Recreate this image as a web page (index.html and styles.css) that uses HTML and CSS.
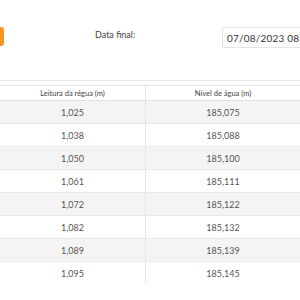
FILE: index.html
```html
<!DOCTYPE html>
<html lang="pt-BR">
  <head>
    <meta charset="UTF-8" />
    <title>Leituras</title>
    <link rel="stylesheet" href="styles.css">
  </head>
  <body>
    <div class="filters">
      <button class="btn-search" aria-label="Buscar"></button>
      <label class="filter-label" for="data-final">Data final:</label>
      <input id="data-final" class="date-input" type="text" value="07/08/2023 08:00" />
    </div>

    <div class="divider"></div>

    <table class="readings">
      <thead>
        <tr>
          <th>Leitura da régua (m)</th>
          <th>Nível de água (m)</th>
        </tr>
      </thead>
      <tbody>
        <tr><td>1,025</td><td>185,075</td></tr>
        <tr><td>1,038</td><td>185,088</td></tr>
        <tr><td>1,050</td><td>185,100</td></tr>
        <tr><td>1,061</td><td>185,111</td></tr>
        <tr><td>1,072</td><td>185,122</td></tr>
        <tr><td>1,082</td><td>185,132</td></tr>
        <tr><td>1,089</td><td>185,139</td></tr>
        <tr><td>1,095</td><td>185,145</td></tr>
      </tbody>
    </table>
  </body>
</html>
```

FILE: styles.css
```css
body {
  margin: 0;
  font-family: Lato, "Open Sans", sans-serif;
  color: #555;
  background-color: white;
  overflow: hidden;
}
.filters {
  display: flex;
  align-items: flex-start;
  height: 80px;
  padding-top: 27px;
  box-sizing: border-box;
}
.btn-search {
  width: 4px;
  height: 19px;
  padding: 0;
  border: none;
  border-radius: 0 3px 3px 0;
  background-color: #f7931e;
  flex-shrink: 0;
}
.filter-label {
  margin-left: 91px;
  margin-top: 2px;
  font-size: 9px;
  color: #444;
  white-space: nowrap;
  width: 127px;
  flex-shrink: 0;
}
.date-input {
  width: 78px;
  height: 21px;
  padding: 0 0 0 4px;
  border: 1px solid #e4e4e4;
  border-right: none;
  box-sizing: border-box;
  font-family: Lato, sans-serif;
  font-size: 10px;
  letter-spacing: 0.2px;
  color: #333;
  flex-shrink: 0;
}
.divider {
  height: 1px;
  background-color: #e6e6e6;
  margin-bottom: 4px;
}
.readings {
  width: 300px;
  border-collapse: collapse;
  table-layout: fixed;
}
.readings th {
  height: 14px;
  padding: 0;
  font-size: 7.5px;
  font-weight: normal;
  color: #444;
  border-top: 1px solid #e6e6e6;
  border-bottom: 1px solid #e0e0e0;
}
.readings th:first-child,
.readings td:first-child {
  width: 145px;
  border-right: 1px solid #e6e6e6;
}
.readings td {
  height: 22px;
  padding: 0;
  text-align: center;
  font-size: 9px;
  color: #555;
  border-bottom: 1px solid #e8e8e8;
}
.readings tbody tr:nth-child(odd) {
  background-color: #f4f4f4;
}
.readings tbody tr:last-child td {
  border-bottom: none;
}
```
